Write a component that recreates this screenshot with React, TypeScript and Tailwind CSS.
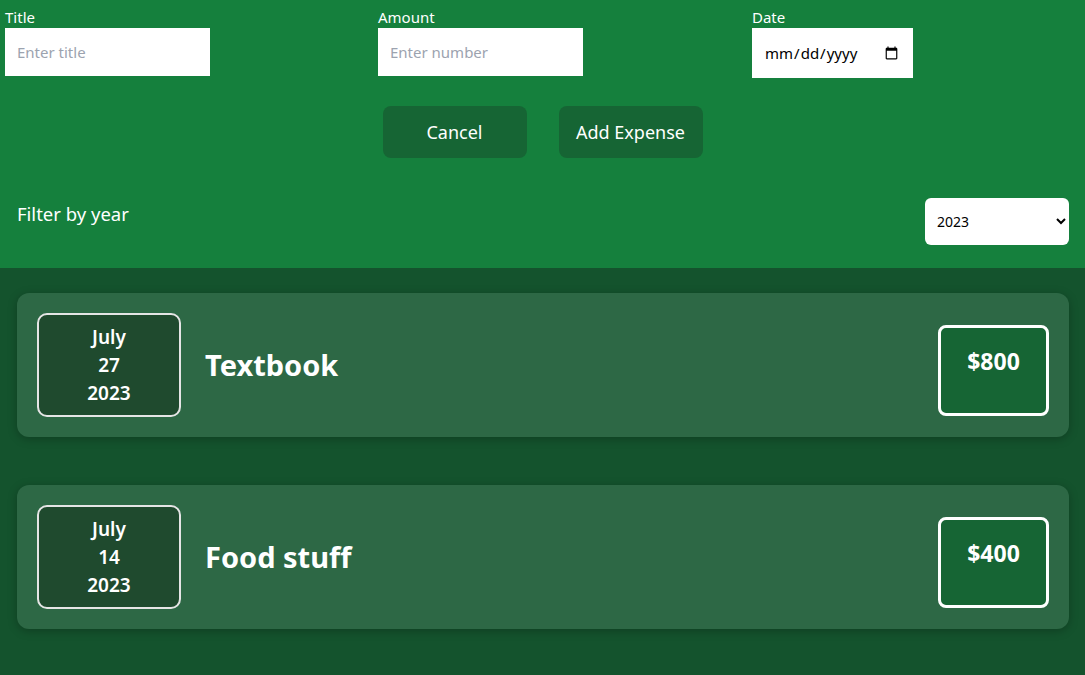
import React, { useState } from 'react';

type Expense = {
  id: string;
  title: string;
  amount: number;
  date: Date;
};

const initialExpenses: Expense[] = [
  { id: 'e1', title: 'Textbook', amount: 800, date: new Date(2023, 6, 27) },
  { id: 'e2', title: 'Food stuff', amount: 400, date: new Date(2023, 6, 14) },
];

const ExpenseDate: React.FC<{ date: Date }> = ({ date }) => {
  const month = date.toLocaleString('en-US', { month: 'long' });
  const day = date.toLocaleString('en-US', { day: '2-digit' });
  const year = date.getFullYear();
  return (
    <div className="flex h-[104px] w-[144px] shrink-0 flex-col items-center justify-center rounded-[10px] border-2 border-[#e5e5e5] bg-[#1f4a2e] text-[19px] font-semibold leading-[28px] text-white">
      <div>{month}</div>
      <div>{day}</div>
      <div>{year}</div>
    </div>
  );
};

const ExpenseItem: React.FC<{ expense: Expense }> = ({ expense }) => (
  <div className="flex h-[144px] items-center rounded-xl bg-[#2d6845] px-5 shadow-[0_2px_10px_rgba(0,0,0,0.25)]">
    <ExpenseDate date={expense.date} />
    <h2 className="ml-6 flex-1 text-[29px] font-bold text-white">{expense.title}</h2>
    <div className="mt-[11px] flex h-[91px] w-[111px] items-start justify-center rounded-lg border-[3px] border-white bg-[#166534] pt-[16px] text-[23px] font-bold text-white">
      ${expense.amount}
    </div>
  </div>
);

const App: React.FC = () => {
  const [expenses] = useState<Expense[]>(initialExpenses);
  const [year, setYear] = useState('2023');

  // 입력 필드 공통 스타일
  const inputClass =
    'h-[48px] w-[205px] bg-white px-3 text-[15px] text-black placeholder:text-[#9ca3af] outline-none';

  return (
    <div className="min-h-[675px] bg-[#14532d] font-['Noto_Sans',sans-serif]">
      <div className="h-[268px] bg-[#15803d]">
        <div className="grid grid-cols-[373px_374px_1fr] pl-[5px] pt-[6px]">
          <div className="flex flex-col">
            <label className="text-[15px] leading-[22px] text-white">Title</label>
            <input className={inputClass} placeholder="Enter title" />
          </div>
          <div className="flex flex-col">
            <label className="text-[15px] leading-[22px] text-white">Amount</label>
            <input className={inputClass} type="number" placeholder="Enter number" />
          </div>
          <div className="flex flex-col">
            <label className="text-[15px] leading-[22px] text-white">Date</label>
            <input className="h-[50px] w-[161px] bg-white px-3 text-[15px] text-black outline-none" type="date" />
          </div>
        </div>

        <div className="mt-[28px] flex justify-center gap-8">
          <button className="h-[52px] w-[144px] rounded-lg bg-[#166534] text-[18px] text-white">Cancel</button>
          <button className="h-[52px] w-[144px] rounded-lg bg-[#166534] text-[18px] text-white">Add Expense</button>
        </div>

        <div className="mt-[40px] flex items-start justify-between pl-[17px] pr-4">
          <span className="mt-[2px] text-[18.5px] text-white">Filter by year</span>
          <select
            value={year}
            onChange={(e) => setYear(e.target.value)}
            className="h-[47px] w-[144px] rounded-md bg-white px-2 text-[14px] text-black outline-none"
          >
            <option value="2023">2023</option>
            <option value="2022">2022</option>
            <option value="2021">2021</option>
          </select>
        </div>
      </div>

      <div className="flex flex-col gap-12 pb-[46px] pl-[17px] pr-[16px] pt-[25px]">
        {expenses.map((expense) => (
          <ExpenseItem key={expense.id} expense={expense} />
        ))}
      </div>
    </div>
  );
};

export default App;
